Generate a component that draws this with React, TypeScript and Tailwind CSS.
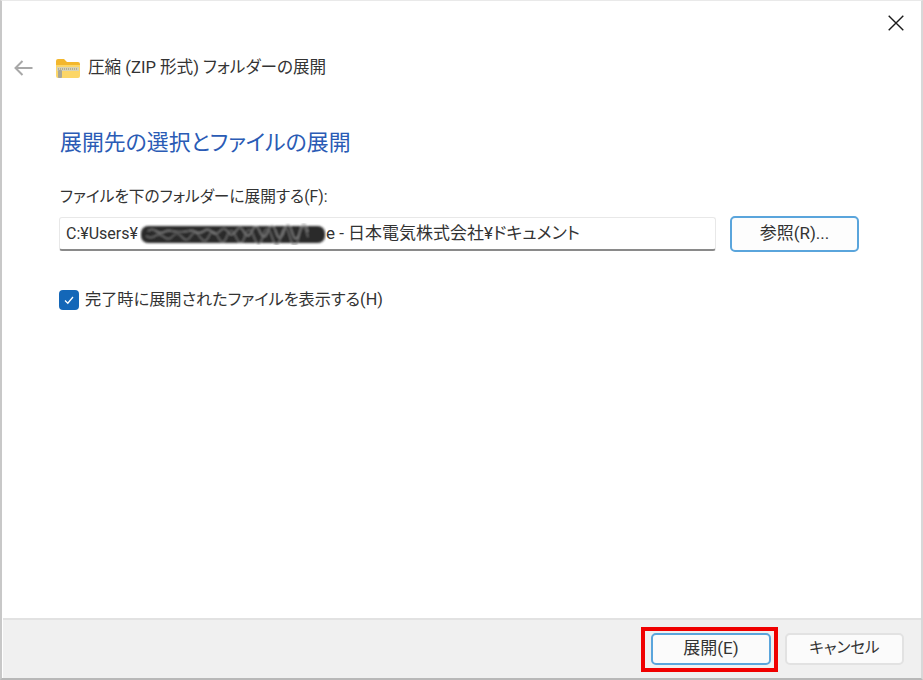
import React from 'react';

const font = "font-['Roboto','Noto_Sans_CJK_JP',sans-serif] [font-feature-settings:'palt']";

function ZipFolder() {
  return (
    <svg width="24" height="21" viewBox="0 0 24 21" className="shrink-0">
      <path d="M0 3a2 2 0 0 1 2-2h6l3 3h11a2 2 0 0 1 2 2v3H0z" fill="#f3b72c" />
      <path d="M0 7h24v11a2 2 0 0 1-2 2H2a2 2 0 0 1-2-2z" fill="#fcd667" />
      <rect x="1" y="9" width="22" height="4" fill="#d8d2b4" />
      <path d="M2 11h20" stroke="#8c8878" strokeWidth="1" strokeDasharray="1 1" />
      <rect x="2" y="12" width="4" height="8" rx="1" fill="#a9a696" />
    </svg>
  );
}

function Scribble() {
  return (
    <svg width="186" height="22" viewBox="0 0 186 22" className="shrink-0 ml-[2px]">
      <defs>
        <filter id="smear"><feGaussianBlur stdDeviation="1" /></filter>
      </defs>
      <g filter="url(#smear)">
        <rect x="1" y="3" width="184" height="17" rx="7" fill="#2a2a2a" />
        <path d="M8 8q4-3 8 0t8 1 8-1 8 1 8-1 8 1 8-1 8 1 8-1 8 1 8-1 8 1 8-1 8 1 8-1 8 1 8-1 8 1 8-1 8 1" stroke="#8f8f8f" strokeWidth="1.2" fill="none" />
        <path d="M6 13q5 3 9 0t9 1 9-1 9 1 9-1 9 1 9-1 9 1 9-1 9 1 9-1 9 1 9-1 9 1 9-1 9 1 9-1 9 1" stroke="#777" strokeWidth="1.2" fill="none" />
      </g>
    </svg>
  );
}

export default function App() {
  return (
    <div className={`${font} w-[923px] h-[680px] flex flex-col bg-white text-[#333] border-t border-t-[#e9e9e9] border-l-2 border-l-[#c8c8c8] border-r-2 border-r-[#d8d8d8] border-b-2 border-b-[#b8b8b8] pl-px`}>
      <div className="flex-1 flex flex-col min-h-0">
        <div className="flex justify-end pt-[14px] pr-[17px]">
          <svg width="16" height="16" viewBox="0 0 16 16">
            <path d="M.7.7l14.6 14.6M15.3.7.7 15.3" stroke="#1a1a1a" strokeWidth="1.4" fill="none" />
          </svg>
        </div>
        <div className="flex items-center mt-[25px] ml-[11px] h-[24px]">
          <svg width="19" height="16" viewBox="0 0 19 16">
            <path d="M18.5 8H1.5M8.5 1 1.5 8l7 7" stroke="#a8a8a8" strokeWidth="2" fill="none" />
          </svg>
          <div className="ml-[23px]"><ZipFolder /></div>
          <span className="ml-[8px] text-[16.6px] whitespace-nowrap">圧縮 (ZIP 形式) フォルダーの展開</span>
        </div>
        <h1 className="mt-[49px] ml-[57px] h-[28px] leading-[28px] text-[21.9px] font-normal text-[#2a5bb5] whitespace-nowrap">展開先の選択とファイルの展開</h1>
        <div className="mt-[30px] ml-[57px] h-[20px] leading-[20px] text-[15.7px] whitespace-nowrap">ファイルを下のフォルダーに展開する(F):</div>
        <div className="flex items-center mt-[9px] ml-[56px]">
          <div className="w-[657px] h-[34px] flex items-center pl-[6px] bg-white border border-[#e8e8e8] border-b-2 border-b-[#8a8a8a] rounded-[3px] text-[16px] whitespace-nowrap overflow-hidden">
            <span>C:¥Users¥</span>
            <Scribble />
            <span className="text-[17px]">e - 日本電気株式会社¥ドキュメント</span>
          </div>
          <button className="ml-[14px] w-[129px] h-[36px] bg-[#fdfdfd] border-2 border-[#5aa5dc] rounded-[5px] text-[17px]">参照(R)...</button>
        </div>
        <label className="flex items-center mt-[37px] ml-[56px] h-[22px]">
          <span className="w-[20px] h-[20px] rounded-[4px] bg-[#1467b8] flex items-center justify-center">
            <svg width="12" height="12" viewBox="0 0 12 12"><path d="M2 6.5 4.8 9.2 10 3" fill="none" stroke="#fff" strokeWidth="1.3" /></svg>
          </span>
          <span className="ml-[6px] text-[16.2px] whitespace-nowrap">完了時に展開されたファイルを表示する(H)</span>
        </label>
      </div>
      <div className="h-[60px] shrink-0 bg-[#f0f0f0] border-t-2 border-t-[#e2e2e2] flex items-center justify-end pr-[17px]">
        <div className="border-[4px] border-[#f00000] w-[137px] h-[45px] flex items-center justify-center pl-[3px] bg-[#f0f0f0]">
          <button className="w-[120px] h-[32px] bg-[#fbfbfb] border-2 border-[#5aa5dc] rounded-[5px] text-[17px]">展開(E)</button>
        </div>
        <button className="ml-[7px] w-[119px] h-[32px] bg-[#fbfbfb] border-2 border-[#e2e2e2] rounded-[5px] text-[15.5px]">キャンセル</button>
      </div>
    </div>
  );
}
